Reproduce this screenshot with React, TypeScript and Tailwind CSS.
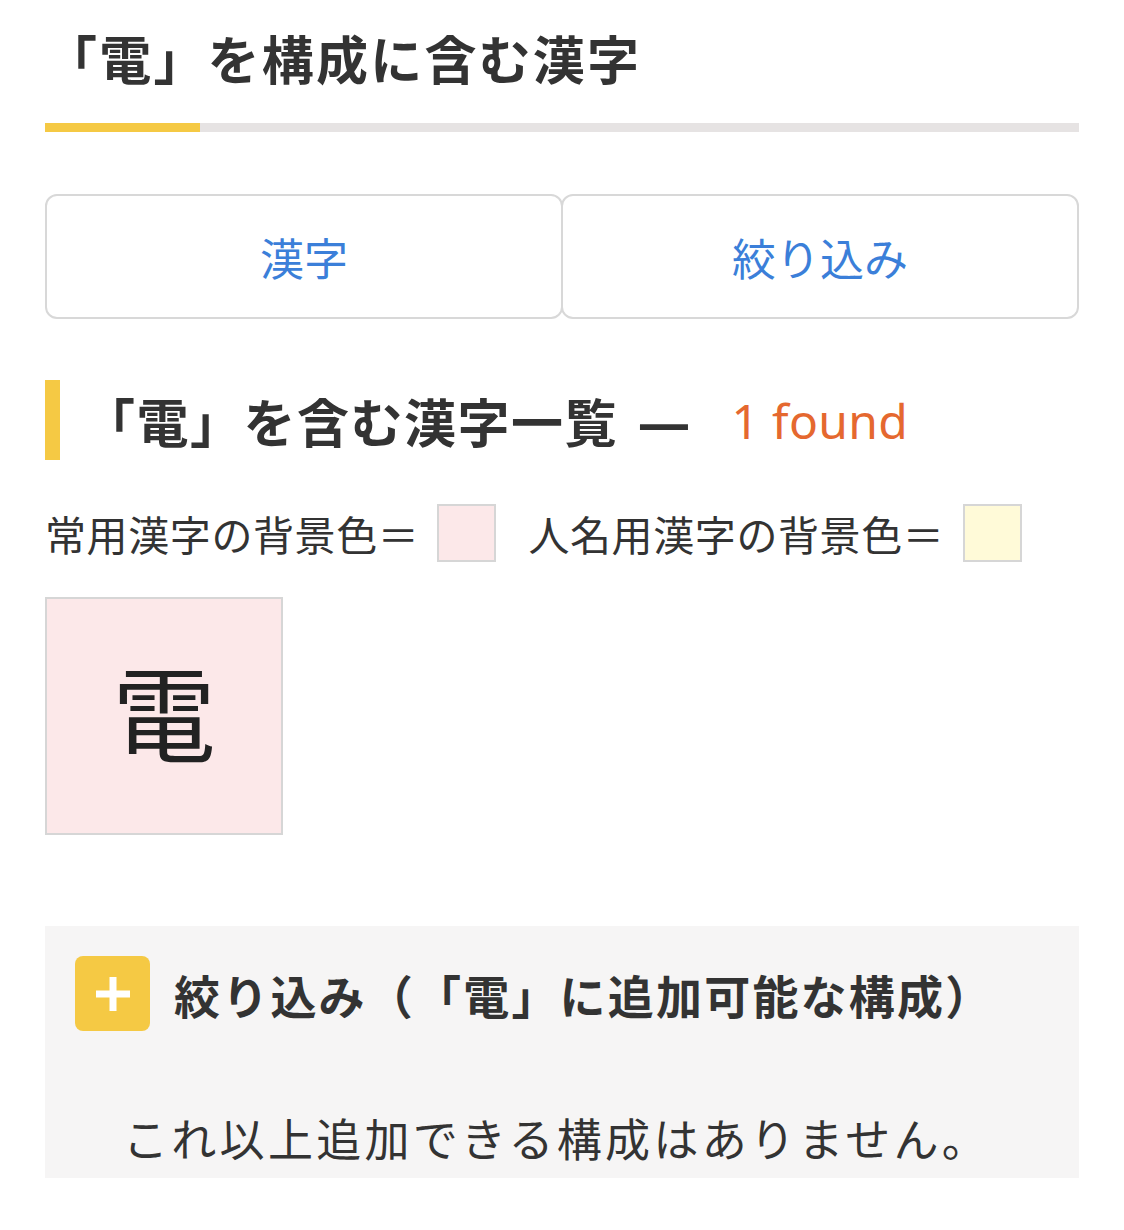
const jp = '"Noto Sans CJK JP", "Noto Sans", sans-serif';

function PlusBadge() {
  return (
    <div className="flex h-[75px] w-[75px] shrink-0 items-center justify-center rounded-[8px] bg-[#f5c944]">
      <svg width="40" height="40" viewBox="0 0 40 40">
        <rect x="16.5" y="3" width="7" height="34" fill="#fff" />
        <rect x="3" y="16.5" width="34" height="7" fill="#fff" />
      </svg>
    </div>
  );
}

export default function App() {
  return (
    <div
      className="min-h-[1230px] w-[1124px] bg-white px-[45px] pt-[32px] text-[#333] [text-spacing-trim:space-all]"
      style={{ fontFamily: jp }}
    >
      {/* Page title */}
      <h1 className="text-[52px] font-bold leading-none tracking-[2.2px]">「電」を構成に含む漢字</h1>
      <div className="mt-[39px] flex h-[9px]">
        <div className="w-[155px] bg-[#f5c944]" />
        <div className="flex-1 bg-[#e6e3e3]" />
      </div>

      {/* Tabs */}
      <div className="mt-[62px] flex h-[125px]">
        <button className="flex-1 rounded-[12px] border-2 border-[#d8d8d8] bg-white text-[44px] leading-none text-[#3b7fd9]">
          漢字
        </button>
        <button className="-ml-[2px] flex-1 rounded-[12px] border-2 border-[#d8d8d8] bg-white text-[44px] leading-none text-[#3b7fd9]">
          絞り込み
        </button>
      </div>

      {/* Section heading */}
      <div className="mt-[61px] flex h-[80px] items-center">
        <div className="h-full w-[15px] bg-[#f5c944]" />
        <h2 className="ml-[23px] mt-[2px] flex items-center text-[52px] font-bold leading-none tracking-[1.5px]">
          <span>「電」を含む漢字一覧</span>
          <span className="ml-[20px]" style={{ fontFamily: '"Noto Sans", sans-serif' }}>
            —
          </span>
          <span
            className="ml-[40px] text-[48px] font-normal tracking-[0.3px] text-[#e5682f]"
            style={{ fontFamily: '"Noto Sans", sans-serif' }}
          >
            1 found
          </span>
        </h2>
      </div>

      {/* Legend */}
      <div className="mt-[44px] flex h-[58px] items-center text-[41px] leading-none tracking-[0.6px]">
        <span>常用漢字の背景色＝</span>
        <span className="ml-[18px] h-[58px] w-[59px] border-2 border-[#d6d6d6] bg-[#fce8e9]" />
        <span className="ml-[32px]">人名用漢字の背景色＝</span>
        <span className="ml-[19px] h-[58px] w-[59px] border-2 border-[#d6d6d6] bg-[#fffad8]" />
      </div>

      {/* Kanji list */}
      <div className="mt-[35px] flex">
        <div className="flex h-[238px] w-[238px] items-center justify-center border-2 border-[#d6d6d6] bg-[#fce8e9] pb-[12px] text-[104px] leading-none text-[#222]">
          電
        </div>
      </div>

      {/* Filter panel */}
      <div className="mt-[91px] h-[252px] bg-[#f6f5f5] px-[30px] pt-[30px]">
        <div className="flex items-center">
          <PlusBadge />
          <h3 className="ml-[24px] text-[46px] font-bold leading-none tracking-[2.2px]">
            絞り込み（「電」に追加可能な構成）
          </h3>
        </div>
        <p className="ml-[48px] mt-[84px] text-[45px] leading-none tracking-[3.3px]">
          これ以上追加できる構成はありません。
        </p>
      </div>
    </div>
  );
}
